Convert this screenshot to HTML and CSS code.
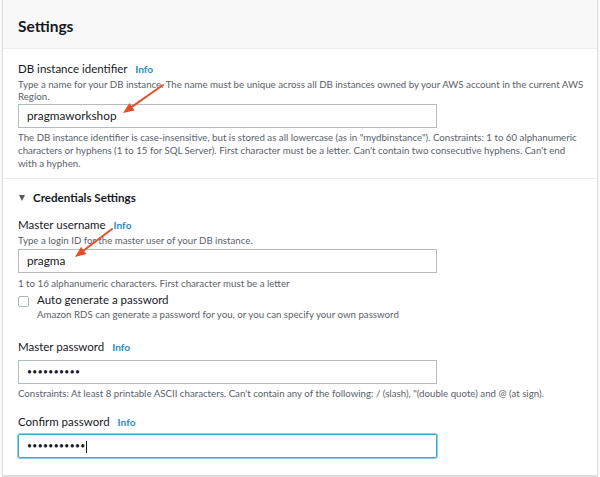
FILE: index.html
```html
<!DOCTYPE html>
<html>
<head>
<meta charset="utf-8">
<link rel="stylesheet" href="styles.css">
</head>
<body>
<div class="panel">
  <div class="panel-header"><h2>Settings</h2></div>
  <div class="section first">
    <div class="label">DB instance identifier <a class="info">Info</a></div>
    <div class="desc">Type a name for your DB instance. The name must be unique across all DB instances owned by your AWS account in the current AWS<br>Region.</div>
    <div class="input i1">pragmaworkshop</div>
    <div class="hint h1">The DB instance identifier is case-insensitive, but is stored as all lowercase (as in "mydbinstance"). Constraints: 1 to 60 alphanumeric<br>characters or hyphens (1 to 15 for SQL Server). First character must be a letter. Can't contain two consecutive hyphens. Can't end<br>with a hyphen.</div>
  </div>
  <div class="section second">
    <div class="expander"><span class="caret"></span>Credentials Settings</div>
    <div class="label l2">Master username <a class="info">Info</a></div>
    <div class="desc">Type a login ID for the master user of your DB instance.</div>
    <div class="input i2">pragma</div>
    <div class="hint h2">1 to 16 alphanumeric characters. First character must be a letter</div>
    <div class="check">
      <span class="box"></span>
      <div>
        <div class="check-label">Auto generate a password</div>
        <div class="desc">Amazon RDS can generate a password for you, or you can specify your own password</div>
      </div>
    </div>
    <div class="label l3">Master password <a class="info">Info</a></div>
    <div class="input i3 dots">••••••••••</div>
    <div class="hint h3">Constraints: At least 8 printable ASCII characters. Can't contain any of the following: / (slash), "(double quote) and @ (at sign).</div>
    <div class="label l4">Confirm password <a class="info">Info</a></div>
    <div class="input i4 dots focus">•••••••••••<span class="cursor"></span></div>
  </div>
</div>
<svg class="arrow a1" width="55" height="40" viewBox="0 0 55 40"><line x1="48" y1="5" x2="16" y2="27.4" stroke="#e2512b" stroke-width="2" stroke-linecap="round"/><polygon points="8,33 19.6,30.4 14.4,23" fill="#e2512b"/></svg>
<svg class="arrow a2" width="50" height="40" viewBox="0 0 50 40"><line x1="44" y1="5" x2="15" y2="27" stroke="#e2512b" stroke-width="2" stroke-linecap="round"/><polygon points="7,33 18.5,30 13.1,22.8" fill="#e2512b"/></svg>
</body>
</html>
```
FILE: styles.css
```css
html, body { margin: 0; padding: 0; background: #fbfbfb; }
body {
  font-family: "Lato", "Open Sans", sans-serif;
  color: #16191f;
  width: 600px;
  height: 477px;
  overflow: hidden;
  position: relative;
}
.panel {
  margin: 0 2px 0 2px;
  background: #fff;
  border: 1px solid #dcdfe0;
  border-top: none;
  box-shadow: 0 1px 1px rgba(0,0,0,0.12);
  height: 476px;
  box-sizing: border-box;
}
.panel-header {
  background: #f8f8f8;
  border-bottom: 1px solid #eaeded;
  height: 49px;
  box-sizing: border-box;
  padding: 0 15px;
  display: flex;
  align-items: center;
}
.panel-header h2 {
  margin: 0;
  font-size: 15.5px;
  font-weight: 700;
  color: #16191f;
  padding-top: 3px;
}
.section {
  padding: 0 15px;
  white-space: nowrap;
}
.first { padding-top: 12px; padding-bottom: 8px; border-bottom: 1px solid #eaeded; }
.second { padding-top: 11px; }
.label {
  font-size: 11.5px;
  line-height: 16px;
  color: #16191f;
}
.info {
  font-weight: 700;
  font-size: 10.2px;
  margin-left: 5px;
  color: #2b8cc4;
}
.desc, .hint {
  font-size: 9.7px;
  line-height: 12px;
  color: #5a6168;
}
.label + .desc { margin-top: 1px; }
.hint { line-height: 13px; }
.input {
  width: 419px;
  height: 24px;
  box-sizing: border-box;
  border: 1px solid #b5bcbd;
  padding: 0 8px;
  font-size: 11.8px;
  line-height: 22px;
  color: #16191f;
}
.i1 { margin-top: 2px; }
.h1 { margin-top: 3px; }
.expander {
  font-size: 11.6px;
  font-weight: 700;
  line-height: 16px;
  color: #16191f;
  display: flex;
  align-items: center;
}
.caret {
  width: 0; height: 0;
  border-left: 3.5px solid transparent;
  border-right: 3.5px solid transparent;
  border-top: 6px solid #545b64;
  margin: 0 8px 0 1px;
}
.l2 { margin-top: 11px; }
.i2 { margin-top: 3px; }
.h2 { margin-top: 4px; }
.check {
  display: flex;
  gap: 8px;
  margin-top: 2px;
}
.box {
  width: 11px;
  height: 11px;
  box-sizing: border-box;
  border: 1px solid #aab7b8;
  border-radius: 2px;
  margin-top: 4px;
  flex: none;
}
.check-label { font-size: 11.5px; line-height: 16px; }
.l3 { margin-top: 19px; }
.i3 { margin-top: 5px; }
.h3 { margin-top: 3px; }
.l4 { margin-top: 14px; }
.i4 { margin-top: 4px; }
.dots { font-size: 8.5px; letter-spacing: 0.4px; }
.focus {
  border: 1px solid #3ea8cf;
  box-shadow: 0 0 0 1px #8fcde3;
  border-radius: 2px;
}
.cursor {
  display: inline-block;
  width: 1px;
  height: 12px;
  background: #16191f;
  vertical-align: middle;
  margin-left: 0;
}
.arrow { position: absolute; }
.a1 { left: 115px; top: 80px; }
.a2 { left: 68px; top: 224px; }
```
